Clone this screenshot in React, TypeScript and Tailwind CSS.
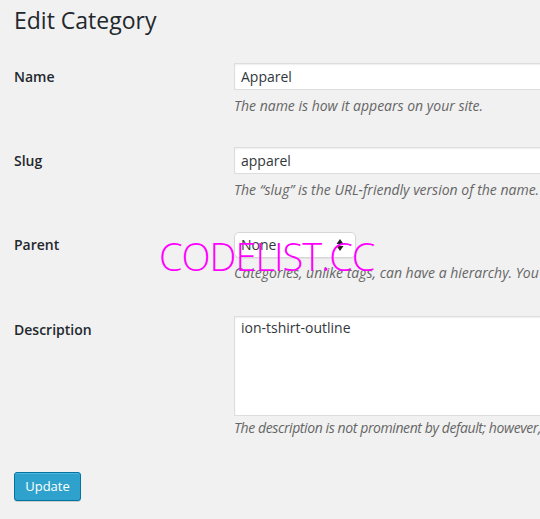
import React from 'react';

const Description: React.FC<{ children: React.ReactNode; className?: string }> = ({ children, className }) => (
  <p className={`text-[14px] leading-[18px] italic text-[#666] whitespace-nowrap ${className ?? ''}`}>{children}</p>
);

export default function App() {
  return (
    <div className="relative w-[540px] h-[519px] overflow-hidden bg-[#f1f1f1] font-['Open_Sans',sans-serif] text-[#23282d]">
      <div className="pl-[14px]">
        <h1 className="pt-[5px] text-[23px] leading-[30px] font-normal">Edit Category</h1>

        {/* Name */}
        <div className="mt-[28px] flex">
          <label className="w-[220px] shrink-0 text-[14px] leading-[27px] font-semibold">Name</label>
          <div>
            <div className="h-[27px] w-[400px] border border-[#ddd] bg-white px-[6px] text-[14px] leading-[25px] text-[#32373c] shadow-[inset_0_1px_2px_rgba(0,0,0,0.07)]">
              Apparel
            </div>
            <Description className="mt-[7px]">The name is how it appears on your site.</Description>
          </div>
        </div>

        {/* Slug */}
        <div className="mt-[32px] flex">
          <label className="w-[220px] shrink-0 text-[14px] leading-[27px] font-semibold">Slug</label>
          <div>
            <div className="h-[27px] w-[400px] border border-[#ddd] bg-white px-[6px] text-[14px] leading-[25px] text-[#32373c] shadow-[inset_0_1px_2px_rgba(0,0,0,0.07)]">
              apparel
            </div>
            <Description className="mt-[7px]">The “slug” is the URL-friendly version of the name.</Description>
          </div>
        </div>

        {/* Parent */}
        <div className="mt-[33px] flex">
          <label className="w-[220px] shrink-0 text-[14px] leading-[26px] font-semibold">Parent</label>
          <div>
            <div className="flex h-[26px] w-[122px] items-center justify-between rounded-[5px] border border-[#d6d6d6] bg-white pl-[6px] pr-[11px] text-[14px] text-[#32373c] shadow-[0_1px_1px_rgba(0,0,0,0.06)]">
              <span className="leading-[24px]">None</span>
              <svg width="8" height="14" viewBox="0 0 8 14" className="text-[#222]">
                <path d="M4 1 L7.5 6 L0.5 6 Z" fill="currentColor" />
                <path d="M4 13 L7.5 8 L0.5 8 Z" fill="currentColor" />
              </svg>
            </div>
            <Description className="mt-[6px]">Categories, unlike tags, can have a hierarchy. You</Description>
          </div>
        </div>

        {/* Description */}
        <div className="mt-[34px] flex">
          <label className="w-[220px] shrink-0 pt-[4px] text-[14px] leading-[20px] font-semibold">Description</label>
          <div>
            <div className="h-[100px] w-[400px] border border-[#ddd] bg-white px-[6px] pt-[1px] text-[14px] leading-[20px] text-[#32373c] shadow-[inset_0_1px_2px_rgba(0,0,0,0.07)]">
              ion-tshirt-outline
            </div>
            <Description className="mt-[3px] tracking-[-0.4px]">The description is not prominent by default; however,</Description>
          </div>
        </div>

        <button className="mt-[35px] flex h-[29px] w-[67px] items-center justify-center rounded-[3px] border border-[#0074a2] bg-[#2ea2cc] text-[13px] text-white shadow-[inset_0_1px_0_rgba(120,200,230,0.5),0_1px_0_rgba(0,0,0,0.15)]">
          Update
        </button>
      </div>

      <div className="pointer-events-none absolute left-[159px] top-[237px] whitespace-nowrap text-[38px] leading-none font-light tracking-[-1px] text-[#ff00ff]">
        CODELIST.CC
      </div>
    </div>
  );
}
